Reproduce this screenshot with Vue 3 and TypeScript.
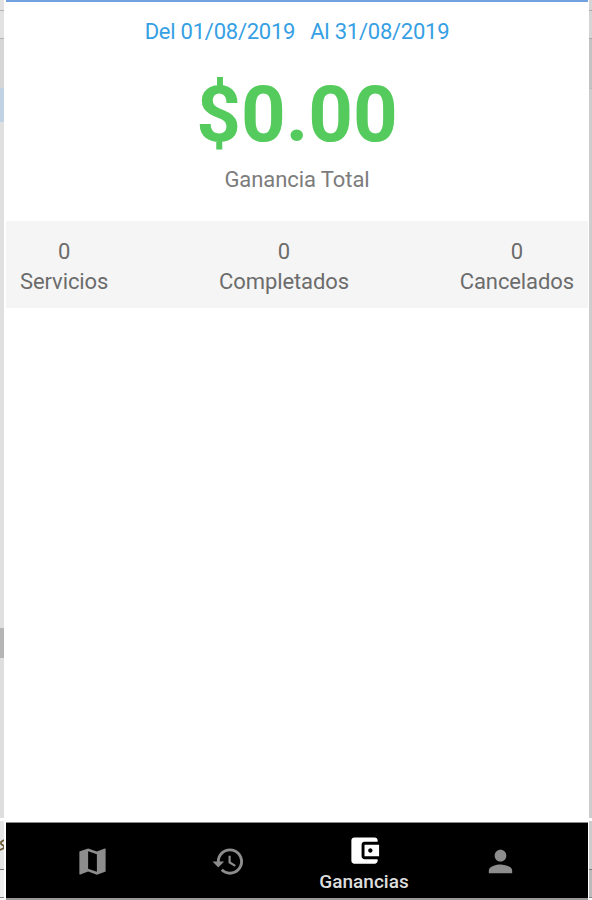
<script setup lang="ts">
interface Stat { label: string; value: number }
interface Tab { id: string; label: string; path: string }

const stats: Stat[] = [
  { label: 'Servicios', value: 0 },
  { label: 'Completados', value: 0 },
  { label: 'Cancelados', value: 0 },
]

const activeTab = 'wallet'
const tabs: Tab[] = [
  { id: 'map', label: 'Mapa', path: 'M20.5 3l-.16.03L15 5.1 9 3 3.36 4.9c-.21.07-.36.25-.36.48V20.5c0 .28.22.5.5.5l.16-.03L9 18.9l6 2.1 5.64-1.9c.21-.07.36-.25.36-.48V3.5c0-.28-.22-.5-.5-.5zM15 19l-6-2.11V5l6 2.11V19z' },
  { id: 'history', label: 'Historial', path: 'M13 3c-4.97 0-9 4.03-9 9H1l3.89 3.89.07.14L9 12H6c0-3.87 3.13-7 7-7s7 3.13 7 7-3.13 7-7 7c-1.93 0-3.68-.79-4.94-2.06l-1.42 1.42C8.27 19.99 10.51 21 13 21c4.97 0 9-4.03 9-9s-4.03-9-9-9zm-1 5v5l4.28 2.54.72-1.21-3.5-2.08V8H12z' },
  { id: 'wallet', label: 'Ganancias', path: 'M21 18v1c0 1.1-.9 2-2 2H5c-1.11 0-2-.9-2-2V5c0-1.1.89-2 2-2h14c1.1 0 2 .9 2 2v1h-9c-1.11 0-2 .9-2 2v8c0 1.1.89 2 2 2h9zm-9-2h10V8H12v8zm4-2.5c-.83 0-1.5-.67-1.5-1.5s.67-1.5 1.5-1.5 1.5.67 1.5 1.5-.67 1.5-1.5 1.5z' },
  { id: 'person', label: 'Perfil', path: 'M12 12c2.21 0 4-1.79 4-4s-1.79-4-4-4-4 1.79-4 4 1.79 4 4 4zm0 2c-2.67 0-8 1.34-8 4v2h16v-2c0-2.66-5.33-4-8-4z' },
]
</script>

<template>
  <div class="window">
    <div class="edge left">
      <i class="box b1"></i><i class="box b2"></i><i class="box b3"></i><i class="blue"></i>
      <i class="track"></i><i class="thumb"></i><i class="rest"></i>
      <i class="foot"><svg viewBox="0 0 4 12"><path d="M4 1L1 3v2l3 2v2L0 11" /></svg></i>
      <i class="end"></i>
    </div>
    <main class="screen">
      <header class="summary">
        <div class="range"><span>Del 01/08/2019</span><span>Al 31/08/2019</span></div>
        <div class="amount">$0.00</div>
        <div class="caption">Ganancia Total</div>
      </header>
      <section class="stats">
        <div v-for="stat in stats" :key="stat.label" class="stat">
          <span>{{ stat.value }}</span>
          <span>{{ stat.label }}</span>
        </div>
      </section>
      <div class="content"></div>
      <nav class="tabs">
        <button v-for="tab in tabs" :key="tab.id" class="tab" :class="[tab.id, { active: tab.id === activeTab }]" :aria-label="tab.label">
          <svg viewBox="0 0 24 24"><path :d="tab.path" /></svg>
          <span v-if="tab.id === activeTab">{{ tab.label }}</span>
        </button>
      </nav>
    </main>
    <div class="edge right">
      <i class="box b1"></i><i class="box b2"></i><i class="box b3"></i><i class="long"></i>
      <i class="foot"></i><i class="end"></i>
    </div>
  </div>
</template>

<style>
body { background: #fff; }
</style>

<style scoped>
.window {
  display: grid;
  grid-template-columns: 6px 582px 4px;
  width: 592px;
  height: 900px;
  overflow: hidden;
  font-family: Roboto, sans-serif;
}
.edge { display: flex; flex-direction: column; background: #fff; }
.left { padding-right: 2px; }
.right { padding-left: 1px; }
.edge i { display: block; flex: none; box-sizing: border-box; }
.box { background: #e2e2e2; border-bottom: 1px solid #b4b4b4; }
.b1 { height: 11px; }
.b2 { height: 28px; }
.left .b3 { height: 49px; background: #d6d6d6; border: 0; }
.blue { height: 34px; background: #c0d2e3; }
.track { height: 506px; background: #e0e0e0; }
.thumb { height: 30px; background: #b5b5b5; }
.rest { height: 160px; background: #dedede; }
.foot { height: 49px; margin-top: 3px; background: #e5e5e5; border-bottom: 1px solid #777; }
.left .foot { padding-top: 18px; }
.foot svg { display: block; width: 4px; height: 12px; fill: none; stroke: #65552c; stroke-width: 1.6; }
.end { height: 28px; background: #eee; border-bottom: 1px solid #888; }
.right .box { background: #d5d5d5; border-color: #aaa; }
.right .b3 { height: 50px; background: #c3c3c3; border-color: #bbb; }
.long { height: 729px; background: #cdcdcd; }
.right .foot { background: #ccc; }
.right .end { background: #bbb; }

.screen { display: flex; flex-direction: column; min-width: 0; height: 900px; }
.summary {
  display: flex;
  flex-direction: column;
  align-items: center;
  height: 221px;
  box-sizing: border-box;
  border-top: 2px solid #71a2df;
  white-space: nowrap;
}
.range {
  display: flex;
  gap: 15px;
  margin-top: 16px;
  font-size: 22px;
  line-height: 28px;
  letter-spacing: -0.24px;
  color: #36a0e4;
}
.amount {
  margin-top: 21px;
  font-size: 78px;
  font-weight: 700;
  line-height: 96px;
  color: #55cb5d;
}
.caption { margin-top: 3px; font-size: 22px; line-height: 28px; letter-spacing: -0.08px; color: #7c7c7c; }
.stats {
  display: flex;
  justify-content: space-between;
  height: 87px;
  box-sizing: border-box;
  padding: 16px 14px 0 14px;
  background: #f5f5f5;
  color: #6c6c6c;
  font-size: 22px;
  line-height: 29.5px;
  letter-spacing: -0.1px;
}
.stat { display: flex; flex-direction: column; align-items: center; }
.content { flex: 1; background: #fff; }
.tabs {
  display: grid;
  grid-template-columns: repeat(4, 136px);
  justify-content: center;
  height: 78px;
  box-sizing: border-box;
  border-top: 1px solid #8a8a8a;
  border-bottom: 2px solid #999;
  padding-right: 2px;
  background: #000;
}
.tab {
  display: flex;
  flex-direction: column;
  align-items: center;
  border: 0;
  padding: 21px 0 0;
  background: none;
  color: #8d8d8d;
  font-family: inherit;
}
.tab svg { width: 35px; height: 35px; fill: currentColor; flex: none; }
.tab.active { padding-top: 10px; color: #fff; }
.tab span { margin-top: 3px; font-size: 19px; font-weight: 500; line-height: 22px; letter-spacing: 0; color: #dedede; }
</style>
